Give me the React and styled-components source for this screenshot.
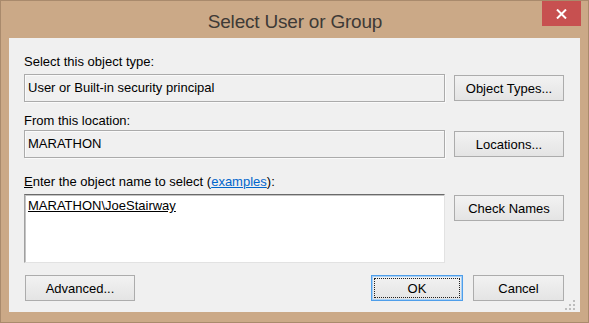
import React from 'react';
import styled, { createGlobalStyle } from 'styled-components';

const Global = createGlobalStyle`
  html, body { margin: 0; padding: 0; background: #CBA987; }
  body { font-family: "Liberation Sans", Arial, sans-serif; }
`;

const Window = styled.div`
  width: 589px;
  height: 323px;
  box-sizing: border-box;
  border: 1px solid #A98A6C;
  background: #CBA987;
  display: flex;
  flex-direction: column;
`;

const TitleBar = styled.div`
  height: 37px;
  flex: none;
  display: grid;
  grid-template-columns: 1fr auto 1fr;
  padding: 0 7px 0 8px;
`;

const Title = styled.div`
  grid-column: 2;
  margin-top: 9px;
  font-size: 19px;
  line-height: 24px;
  color: #3E3A36;
  letter-spacing: -0.2px;
  white-space: nowrap;
`;

const CloseButton = styled.button`
  grid-column: 3;
  justify-self: end;
  align-self: start;
  width: 39px;
  height: 25px;
  border: none;
  padding: 0;
  background: #C75050;
  display: flex;
  align-items: center;
  justify-content: center;
  svg { margin-top: 1px; }
`;

const Client = styled.div`
  position: relative;
  height: 274px;
  flex: none;
  margin: 0 8px;
  box-sizing: border-box;
  background: #F0F0F0;
  padding: 16px 16px 0 15px;
  display: flex;
  flex-direction: column;
`;

const Label = styled.div`
  font-size: 13px;
  line-height: 15px;
  color: #000;
  margin-top: ${(p) => p.$top || 0}px;
  u { text-decoration: underline; }
`;

const Link = styled.a`
  color: #0066CC;
  text-decoration: underline;
`;

const Row = styled.div`
  display: grid;
  grid-template-columns: 421px 110px;
  column-gap: 9px;
  align-items: ${(p) => p.$align || 'center'};
  margin-top: ${(p) => p.$top || 0}px;
`;

const Field = styled.div`
  height: 28px;
  box-sizing: border-box;
  border: 1px solid #ABABAB;
  box-shadow: inset 1px 1px 0 #FAFAFA, 1px 1px 0 #FAFAFA;
  background: #F0F0F0;
  font-size: 13px;
  line-height: 15px;
  padding: 5px 3px;
  color: #000;
  white-space: nowrap;
`;

const TextArea = styled.div`
  height: 69px;
  box-sizing: border-box;
  background: #FFFFFF;
  border-style: solid;
  border-width: 1px;
  border-color: #6A6A6A #E2E2E2 #E2E2E2 #A0A0A0;
  box-shadow: inset 1px 1px 0 #C4C4C4;
  padding: 3px 3px;
  font-size: 13px;
  line-height: 15px;
  color: #000;
`;

const Resolved = styled.span`
  text-decoration: underline;
`;

const Button = styled.button`
  width: ${(p) => p.$w || 110}px;
  height: 26px;
  box-sizing: border-box;
  margin: 0;
  margin-top: ${(p) => p.$top || 0}px;
  padding: 0;
  border: 1px solid ${(p) => (p.$default ? '#4E9EEA' : '#ACACAC')};
  box-shadow: ${(p) => (p.$default ? 'inset 0 0 0 1px #A8D0F5' : 'none')};
  background: linear-gradient(#F2F2F2, #E4E4E4);
  font-family: "Liberation Sans", Arial, sans-serif;
  font-size: 13px;
  color: #000;
  position: relative;
  display: flex;
  align-items: center;
  justify-content: center;
`;

const FocusRect = styled.span`
  position: absolute;
  inset: 2px;
  border: 1px dotted #222;
  pointer-events: none;
`;

const ButtonRow = styled.div`
  display: flex;
  align-items: center;
  margin-top: 12px;
  padding-left: 1px;
`;

const Spacer = styled.div`
  flex: 1;
`;

const Pair = styled.div`
  display: flex;
  gap: 10px;
`;

const Grip = styled.svg`
  position: absolute;
  right: 4px;
  bottom: 1px;
`;

export default function App() {
  return (
    <>
      <Global />
      <Window>
        <TitleBar>
          <Title>Select User or Group</Title>
          <CloseButton aria-label="Close">
            <svg width="11" height="10" viewBox="0 0 11 10">
              <path d="M1 0.5 L10 9.5 M10 0.5 L1 9.5" stroke="#FFFFFF" strokeWidth="2" />
            </svg>
          </CloseButton>
        </TitleBar>
        <Client>
          <Label>Select this object type:</Label>
          <Row $top={5}>
            <Field>User or Built-in security principal</Field>
            <Button>Object Types...</Button>
          </Row>
          <Label $top={11}>From this location:</Label>
          <Row $top={2}>
            <Field>MARATHON</Field>
            <Button>Locations...</Button>
          </Row>
          <Label $top={16}>
            <u>E</u>nter the object name to select (<Link>examples</Link>):
          </Label>
          <Row $top={5} $align="start">
            <TextArea>
              <Resolved>MARATHON\JoeStairway</Resolved>
            </TextArea>
            <Button $top={1}>Check Names</Button>
          </Row>
          <ButtonRow>
            <Button>Advanced...</Button>
            <Spacer />
            <Pair>
              <Button $w={92} $default>
                <FocusRect />
                OK
              </Button>
              <Button $w={91}>Cancel</Button>
            </Pair>
          </ButtonRow>
          <Grip width="11" height="11" viewBox="0 0 11 11">
            <g fill="#BDBDBD">
              <rect x="8" y="0" width="2" height="2" />
              <rect x="4" y="4" width="2" height="2" />
              <rect x="8" y="4" width="2" height="2" />
              <rect x="0" y="8" width="2" height="2" />
              <rect x="4" y="8" width="2" height="2" />
              <rect x="8" y="8" width="2" height="2" />
            </g>
          </Grip>
        </Client>
      </Window>
    </>
  );
}
